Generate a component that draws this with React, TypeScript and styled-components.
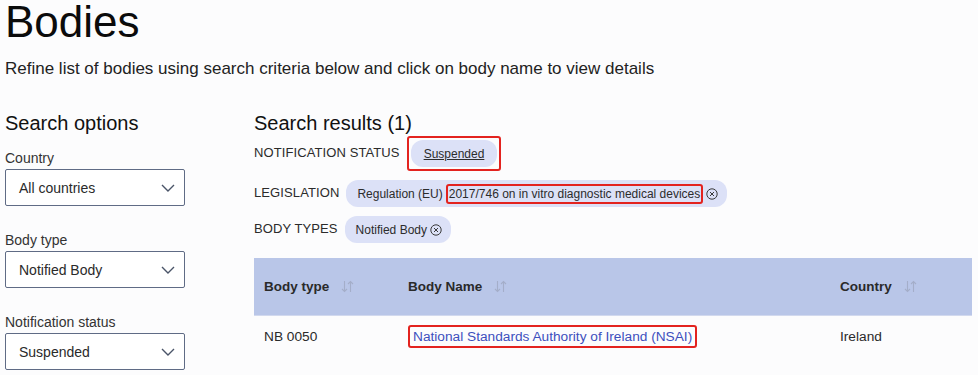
import React, { FC } from "react";
import styled, { createGlobalStyle } from "styled-components";

const GlobalStyle = createGlobalStyle`
  body {
    margin: 0;
    background: #fcfcfd;
    font-family: "Liberation Sans", Arial, sans-serif;
    color: #1f1f1f;
  }
`;

const Chevron: FC = () => (
  <svg width="14" height="8" viewBox="0 0 14 8" fill="none">
    <path d="M1 1l6 6 6-6" stroke="#4a5468" strokeWidth="1.4" />
  </svg>
);

const SortIcon: FC = () => (
  <svg width="13" height="13" viewBox="0 0 13 13" fill="none">
    <path
      d="M3.5 1v10.5M1 9l2.5 2.5L6 9M9.5 12V1.5M7 4l2.5-2.5L12 4"
      stroke="#a4aec9"
      strokeWidth="1.1"
    />
  </svg>
);

const CloseIcon: FC = () => (
  <svg width="12" height="12" viewBox="0 0 12 12" fill="none">
    <circle cx="6" cy="6" r="5.2" stroke="#3a3a3a" strokeWidth="1" />
    <path d="M4 4l4 4M8 4l-4 4" stroke="#3a3a3a" strokeWidth="1" />
  </svg>
);

const SELECTS = [
  { label: "Country", value: "All countries" },
  { label: "Body type", value: "Notified Body" },
  { label: "Notification status", value: "Suspended" },
];

const App: FC = () => (
  <Page>
    <GlobalStyle />
    <Title>Bodies</Title>
    <Lead>
      Refine list of bodies using search criteria below and click on body name
      to view details
    </Lead>
    <Columns>
      <Sidebar>
        <SectionTitle>Search options</SectionTitle>
        {SELECTS.map((s) => (
          <Field key={s.label}>
            <Label>{s.label}</Label>
            <Select>
              <span>{s.value}</span>
              <Chevron />
            </Select>
          </Field>
        ))}
      </Sidebar>
      <Results>
        <SectionTitle>Search results (1)</SectionTitle>
        <Filters>
          <FilterRow>
            <FilterName>NOTIFICATION STATUS</FilterName>
            <Highlight $pad="2px 2px">
              <Chip $px={13}>
                <u>Suspended</u>
              </Chip>
            </Highlight>
          </FilterRow>
          <FilterRow>
            <FilterName>LEGISLATION</FilterName>
            <Chip>
              Regulation (EU)
              <Highlight $pad="1px 1px">
                2017/746 on in vitro diagnostic medical devices
              </Highlight>
              <CloseIcon />
            </Chip>
          </FilterRow>
          <FilterRow>
            <FilterName>BODY TYPES</FilterName>
            <Chip>
              Notified Body
              <CloseIcon />
            </Chip>
          </FilterRow>
        </Filters>
        <Table>
          <colgroup>
            <col style={{ width: 144 }} />
            <col style={{ width: 432 }} />
            <col />
          </colgroup>
          <thead>
            <tr>
              <Th>
                <HeadCell>
                  Body type <SortIcon />
                </HeadCell>
              </Th>
              <Th>
                <HeadCell>
                  Body Name <SortIcon />
                </HeadCell>
              </Th>
              <Th>
                <HeadCell>
                  Country <SortIcon />
                </HeadCell>
              </Th>
            </tr>
          </thead>
          <tbody>
            <tr>
              <Td>NB 0050</Td>
              <Td>
                <Highlight $pad="2px 3px">
                  <BodyLink href="#">
                    National Standards Authority of Ireland (NSAI)
                  </BodyLink>
                </Highlight>
              </Td>
              <Td>Ireland</Td>
            </tr>
          </tbody>
        </Table>
      </Results>
    </Columns>
  </Page>
);

export default App;

const Page = styled.div`
  padding: 0 6px 0 5px;
`;

const Title = styled.h1`
  margin: -3px 0 0;
  font-size: 44px;
  font-weight: 400;
  line-height: 50px;
  color: #0b0b0b;
`;

const Lead = styled.p`
  margin: 12px 0 0;
  font-size: 17px;
  line-height: 20px;
  color: #222;
`;

const Columns = styled.div`
  display: grid;
  grid-template-columns: 249px 1fr;
  margin-top: 32px;
`;

const Sidebar = styled.div`
  display: flex;
  flex-direction: column;
`;

const SectionTitle = styled.h2`
  margin: 0;
  font-size: 20px;
  font-weight: 400;
  line-height: 24px;
  color: #111;
`;

const Field = styled.div`
  margin-top: 15px;
  & + & {
    margin-top: 26px;
  }
`;

const Label = styled.div`
  font-size: 14px;
  line-height: 17px;
  color: #333;
`;

const Select = styled.div`
  display: flex;
  align-items: center;
  justify-content: space-between;
  box-sizing: border-box;
  width: 180px;
  height: 37px;
  margin-top: 2px;
  padding: 0 9px 0 13px;
  border: 1px solid #5f6b85;
  border-radius: 2px;
  background: #fff;
  font-size: 14px;
  color: #2a2a2a;
`;

const Results = styled.div`
  display: flex;
  flex-direction: column;
`;

const Filters = styled.div`
  display: flex;
  flex-direction: column;
  gap: 9px;
  margin-top: 1px;
`;

const FilterRow = styled.div`
  display: flex;
  align-items: center;
  gap: 7px;
  font-size: 13px;
  color: #2b2b2b;
`;

const FilterName = styled.span`
  font-size: 13px;
  letter-spacing: 0.1px;
  margin-top: -3px;
`;

const Chip = styled.span<{ $px?: number }>`
  display: inline-flex;
  align-items: center;
  gap: 3px;
  height: 27px;
  padding: ${(p) => (p.$px ? `0 ${p.$px}px` : "0 9px 0 11px")};
  border-radius: 12px;
  background: #dce1f7;
  font-size: 12px;
  color: #2c2c2c;
  white-space: nowrap;
`;

const Highlight = styled.span<{ $pad: string }>`
  display: inline-flex;
  align-items: center;
  padding: ${(p) => p.$pad};
  border: 2px solid #e3231f;
  border-radius: 3px;
`;

const Table = styled.table`
  margin-top: 15px;
  width: 718px;
  table-layout: fixed;
  border-collapse: collapse;
  font-size: 13.7px;
`;

const Th = styled.th`
  height: 57px;
  padding: 0 10px;
  background: #b9c6e8;
  border-bottom: 1px solid #d2d9ee;
  text-align: left;
  font-weight: 700;
  font-size: 13.5px;
  color: #2a2a2a;
`;

const HeadCell = styled.span`
  display: inline-flex;
  align-items: center;
  gap: 12px;
`;

const Td = styled.td`
  height: 40px;
  padding: 0 10px;
  color: #2a2a2a;
  vertical-align: middle;
`;

const BodyLink = styled.a`
  color: #3d4fbd;
  text-decoration: none;
`;
